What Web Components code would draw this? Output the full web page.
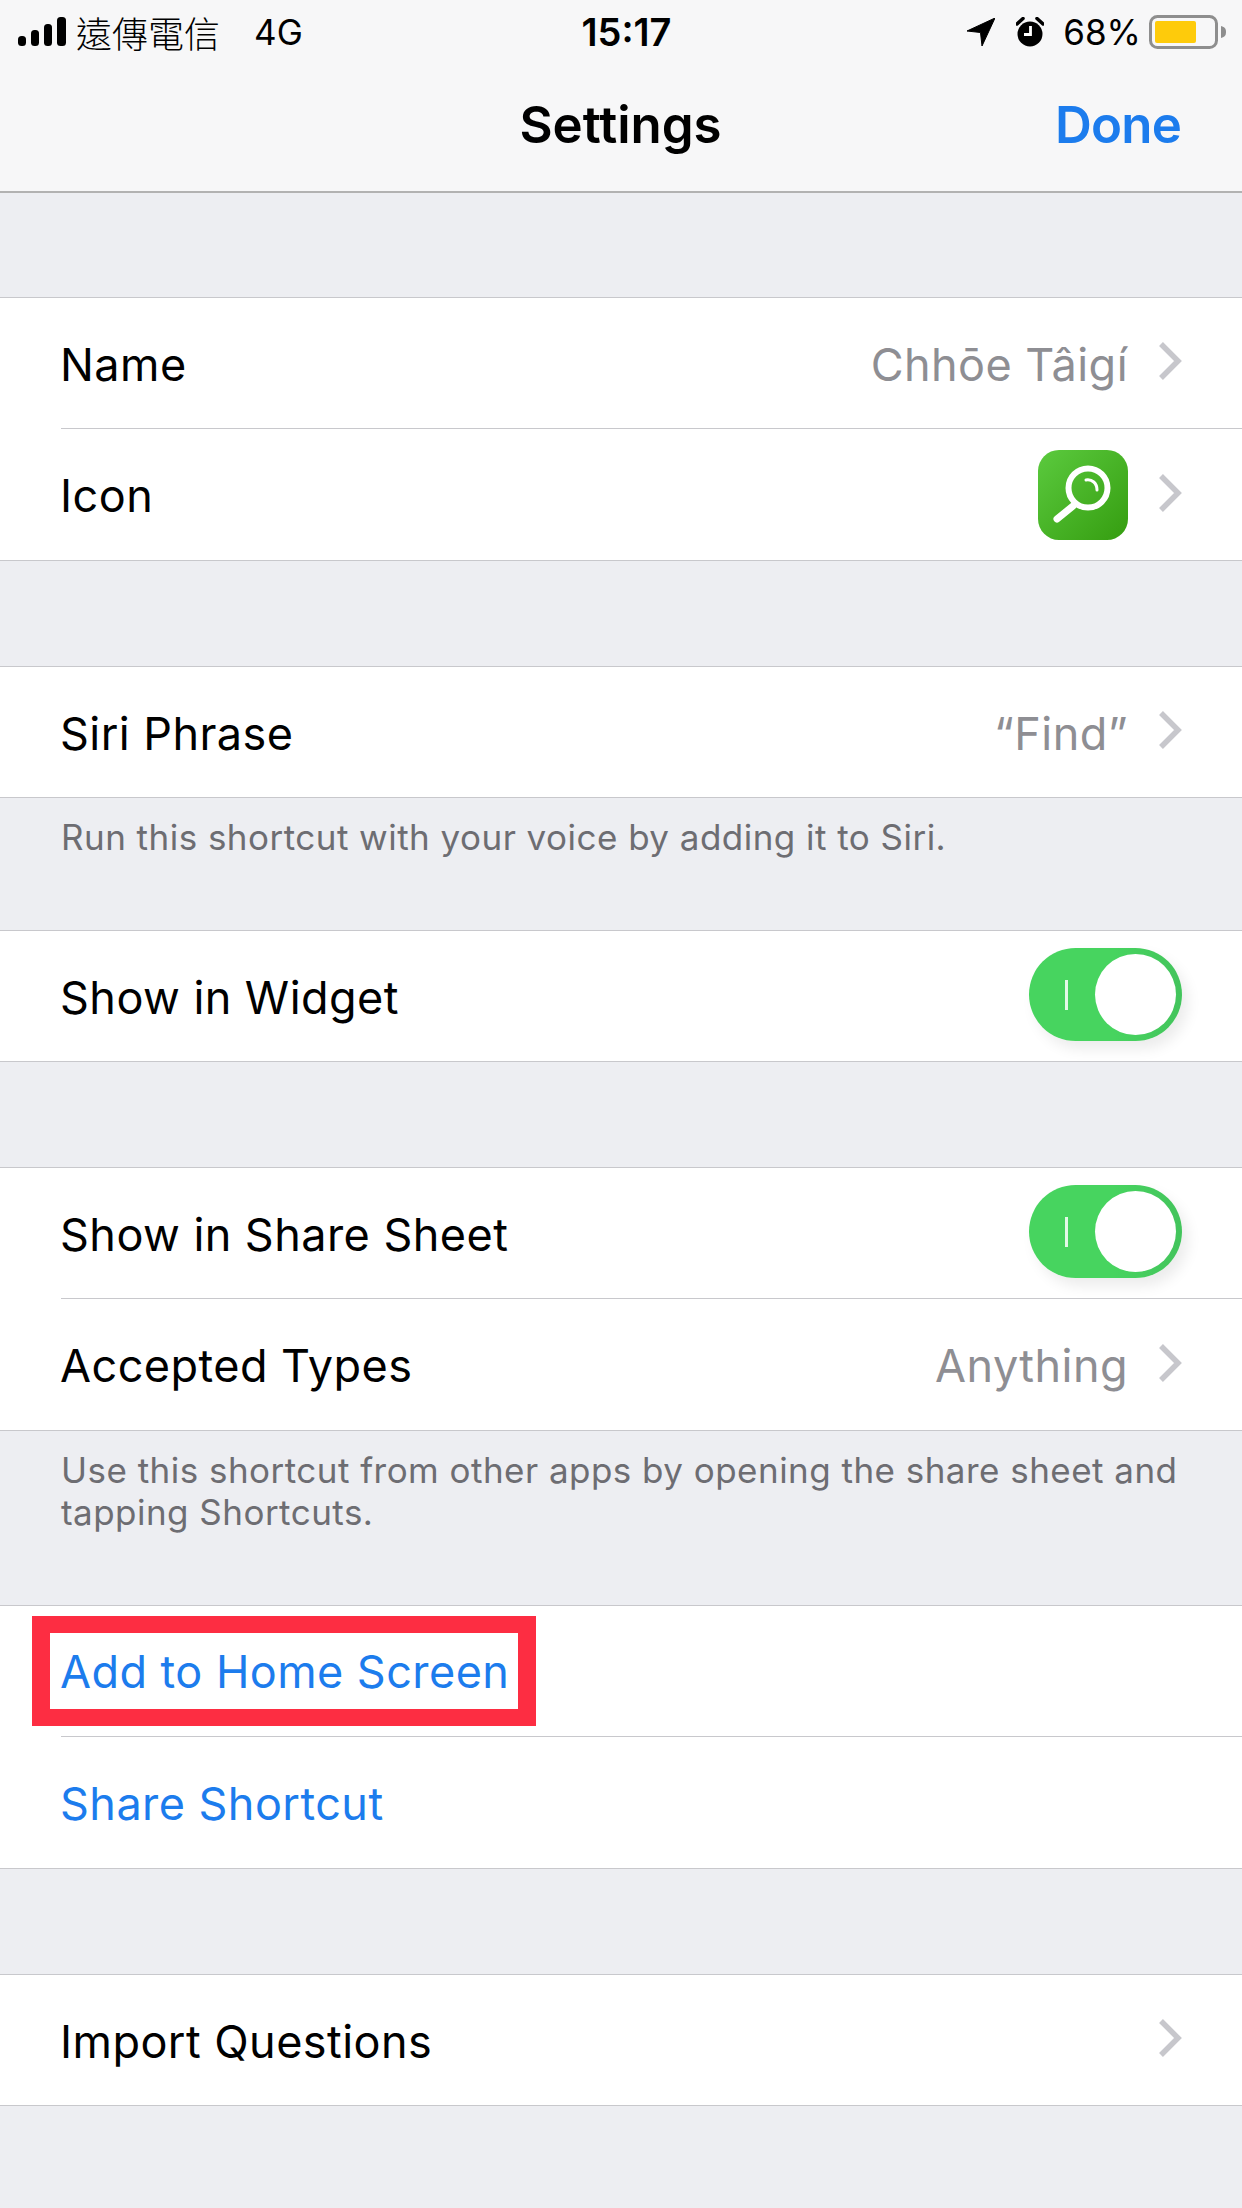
<!DOCTYPE html>
<html>
<head>
<meta charset="utf-8">
<title>Settings</title>
<style>
  html, body { margin: 0; padding: 0; }
  body {
    width: 1242px; height: 2208px; overflow: hidden;
    background: #edeef2; color: #000;
    font-family: Inter, "Noto Sans CJK TC", sans-serif;
  }
</style>
</head>
<body>
<status-bar></status-bar>
<nav-bar title="Settings" action="Done"></nav-bar>

<settings-group>
  <settings-row label="Name" value="Chhōe Tâigí" chevron></settings-row>
  <settings-row label="Icon" chevron last style="--row-h:131px"><app-icon></app-icon></settings-row>
</settings-group>

<settings-group note="Run this shortcut with your voice by adding it to Siri." note-height="132">
  <settings-row label="Siri Phrase" value="“Find”" chevron last></settings-row>
</settings-group>

<settings-group>
  <settings-row label="Show in Widget" last><on-switch></on-switch></settings-row>
</settings-group>

<settings-group note="Use this shortcut from other apps by opening the share sheet and tapping Shortcuts." note-height="174">
  <settings-row label="Show in Share Sheet"><on-switch></on-switch></settings-row>
  <settings-row label="Accepted Types" value="Anything" chevron last style="--row-h:131px"></settings-row>
</settings-group>

<settings-group>
  <settings-row link><red-mark>Add to Home Screen</red-mark></settings-row>
  <settings-row label="Share Shortcut" link last style="--row-h:131px"></settings-row>
</settings-group>

<settings-group>
  <settings-row label="Import Questions" chevron last></settings-row>
</settings-group>

<script>
'use strict';

class StatusBar extends HTMLElement {
  constructor() {
    super();
    this.attachShadow({ mode: 'open' }).innerHTML = `
      <style>
        :host { display: grid; grid-template-columns: 1fr auto 1fr; align-items: center;
          height: 60px; padding: 3px 15px 0 18px; box-sizing: border-box; background: #f7f7f8; color: #000; font-size: 35px; }
        .left, .right { display: flex; align-items: center; }
        .right { justify-content: flex-end; }
        .carrier { margin-left: 10px; font: 300 36px "Noto Sans CJK TC", sans-serif; }
        .net { margin-left: 34px; font-weight: 400; }
        .time { font-size: 38px; font-weight: 600; margin-left: 8px; }
        .pct { margin-left: 19px; }
        .alarm { margin-left: 21px; }
        .batt { margin-left: 8px; }
      </style>
      <div class="left">
        <svg width="48" height="30" viewBox="0 0 48 30">
          <rect x="0" y="19" width="8" height="10" rx="3.500"/>
          <rect x="13" y="13" width="8" height="16" rx="3.500"/>
          <rect x="26" y="7" width="8" height="22" rx="3.500"/>
          <rect x="39" y="0" width="9" height="29" rx="3.500"/>
        </svg>
        <span class="carrier">遠傳電信</span>
        <span class="net">4G</span>
      </div>
      <div class="time">15:17</div>
      <div class="right">
        <svg width="28" height="28" viewBox="0 0 28 28"><path d="M28 0 L0 13 L13.500 14.500 L15 28 Z" stroke="#000" stroke-width="1" stroke-linejoin="round"/></svg>
        <svg class="alarm" width="28" height="30" viewBox="0 0 28 30">
          <circle cx="14" cy="17" r="12.500"/>
          <path d="M1 7 L7 1.500 M27 7 L21 1.500" stroke="#000" stroke-width="3.500" stroke-linecap="round"/>
          <path d="M14.500 9 V17.500 H8" fill="none" stroke="#fff" stroke-width="2.800"/>
        </svg>
        <span class="pct">68%</span>
        <svg class="batt" width="78" height="34" viewBox="0 0 78 34">
          <rect x="1.500" y="1.500" width="66" height="31" rx="7" fill="none" stroke="#8e8e8e" stroke-width="3"/>
          <rect x="6" y="6" width="41" height="22" rx="2" fill="#fecb0b"/>
          <path d="M72 11 C76 12 77 14 77 17 C77 20 76 22 72 23 Z" fill="#8e8e8e"/>
        </svg>
      </div>`;
  }
}

class NavBar extends HTMLElement {
  constructor() {
    super();
    this.attachShadow({ mode: 'open' });
  }

  connectedCallback() {
    this.shadowRoot.innerHTML = `
      <style>
        :host { display: grid; grid-template-columns: 1fr auto 1fr; align-items: center;
          height: 131px; padding: 0 61px 0 60px; background: #f7f7f8; border-bottom: 2px solid #b2b2b2;
          font-size: 51px; margin-bottom: 104px; }
        .title { font-weight: 600; padding-bottom: 2px; }
        .action { justify-self: end; color: #1c7ced; font-weight: 600; letter-spacing: -.8px; padding-bottom: 2px; }
      </style>
      <span></span>
      <span class="title">${this.getAttribute('title')}</span>
      <span class="action">${this.getAttribute('action')}</span>`;
  }
}

class SettingsGroup extends HTMLElement {
  constructor() {
    super();
    this.attachShadow({ mode: 'open' });
  }

  connectedCallback() {
    const note = this.getAttribute('note');
    const noteHeight = this.getAttribute('note-height');
    this.shadowRoot.innerHTML = `
      <style>
        :host { display: block; margin-bottom: ${note ? 0 : 105}px; }
        .rows { background: #fff; border-top: 1.500px solid #c8c8cc; border-bottom: 1.500px solid #c8c8cc; }
        .note { box-sizing: border-box; padding: 18px 50px 0 61px; color: #6d6d72;
          font-size: 35px; line-height: 42px; letter-spacing: .47px; }
      </style>
      <div class="rows"><slot></slot></div>
      ${note ? `<div class="note" style="height:${noteHeight}px">${note}</div>` : ''}`;
  }
}

class SettingsRow extends HTMLElement {
  constructor() {
    super();
    this.attachShadow({ mode: 'open' });
  }

  connectedCallback() {
    const label = this.getAttribute('label') || '';
    const value = this.getAttribute('value') || '';
    const color = this.hasAttribute('link') ? '#1c7ced' : '#000';
    const chevron = this.hasAttribute('chevron') ? `
      <svg class="chev" width="24" height="40" viewBox="0 0 24 40">
        <path d="M3 3 L20 20 L3 37" fill="none" stroke="#c7c7cc" stroke-width="5.500"/>
      </svg>` : '';
    this.shadowRoot.innerHTML = `
      <style>
        :host { display: block; padding-left: 61px; }
        .row { display: flex; align-items: center; height: var(--row-h, 130px); padding-right: 60px;
          border-bottom: ${this.hasAttribute('last') ? 'none' : '1.500px solid #c8c8cc'};
          font-size: 45px; letter-spacing: .45px; color: ${color}; }
        .label { margin-left: -1px; padding-top: 2px; }
        .spacer { flex: 1; }
        .value { color: #8e8e93; padding-top: 2px; }
        .chev { margin-left: 30px; margin-bottom: 4px; }
      </style>
      <div class="row">
        ${label ? `<span class="label">${label}</span>` : ''}
        <slot name="start"></slot>
        <span class="spacer"></span>
        <slot></slot>
        ${value ? `<span class="value">${value}</span>` : ''}
        ${chevron}
      </div>`;
    const mark = this.querySelector('red-mark');
    if (mark) mark.slot = 'start';
  }
}

class AppIcon extends HTMLElement {
  constructor() {
    super();
    this.attachShadow({ mode: 'open' }).innerHTML = `
      <style>:host { display: block; width: 90px; height: 90px; }</style>
      <svg width="90" height="90" viewBox="0 0 90 90">
        <defs><linearGradient id="g" x1="0" y1="0" x2="1" y2="1">
          <stop offset="0" stop-color="#5bca3e"/><stop offset="1" stop-color="#359d10"/>
        </linearGradient></defs>
        <rect width="90" height="90" rx="21" fill="url(#g)"/>
        <circle cx="50" cy="38" r="19.500" fill="none" stroke="#fff" stroke-width="6"/>
        <path d="M35 56 L19 69" stroke="#fff" stroke-width="7" stroke-linecap="round"/>
        <path d="M48 30 C54 29 59 33 59 40" fill="none" stroke="#fff" stroke-width="3" stroke-linecap="round"/>
      </svg>`;
  }
}

class OnSwitch extends HTMLElement {
  constructor() {
    super();
    this.attachShadow({ mode: 'open' }).innerHTML = `
      <style>
        :host { display: block; position: relative; width: 153px; height: 93px; border-radius: 47px; margin-top: -3px;
          background: linear-gradient(90deg, #47d45f 55%, #43c45c); box-shadow: 6px 8px 14px rgba(0,0,0,.08); }
        .mark { position: absolute; left: 36px; top: 32px; width: 3px; height: 30px; background: #fff; opacity: .85; }
        .knob { position: absolute; left: 66px; top: 6px; width: 81px; height: 81px; border-radius: 50%; background: #fff; }
      </style>
      <div class="mark"></div>
      <div class="knob"></div>`;
  }
}

class RedMark extends HTMLElement {
  constructor() {
    super();
    this.attachShadow({ mode: 'open' }).innerHTML = `
      <style>
        :host { display: inline-block; position: relative; margin-left: -1px; }
        .box { position: absolute; left: -28px; right: -27px; top: -28px; bottom: -27px;
          border: solid #fd2d42; border-width: 17px 18px; }
      </style>
      <slot></slot><div class="box"></div>`;
  }
}

customElements.define('status-bar', StatusBar);
customElements.define('nav-bar', NavBar);
customElements.define('settings-group', SettingsGroup);
customElements.define('settings-row', SettingsRow);
customElements.define('app-icon', AppIcon);
customElements.define('on-switch', OnSwitch);
customElements.define('red-mark', RedMark);
</script>
</body>
</html>
